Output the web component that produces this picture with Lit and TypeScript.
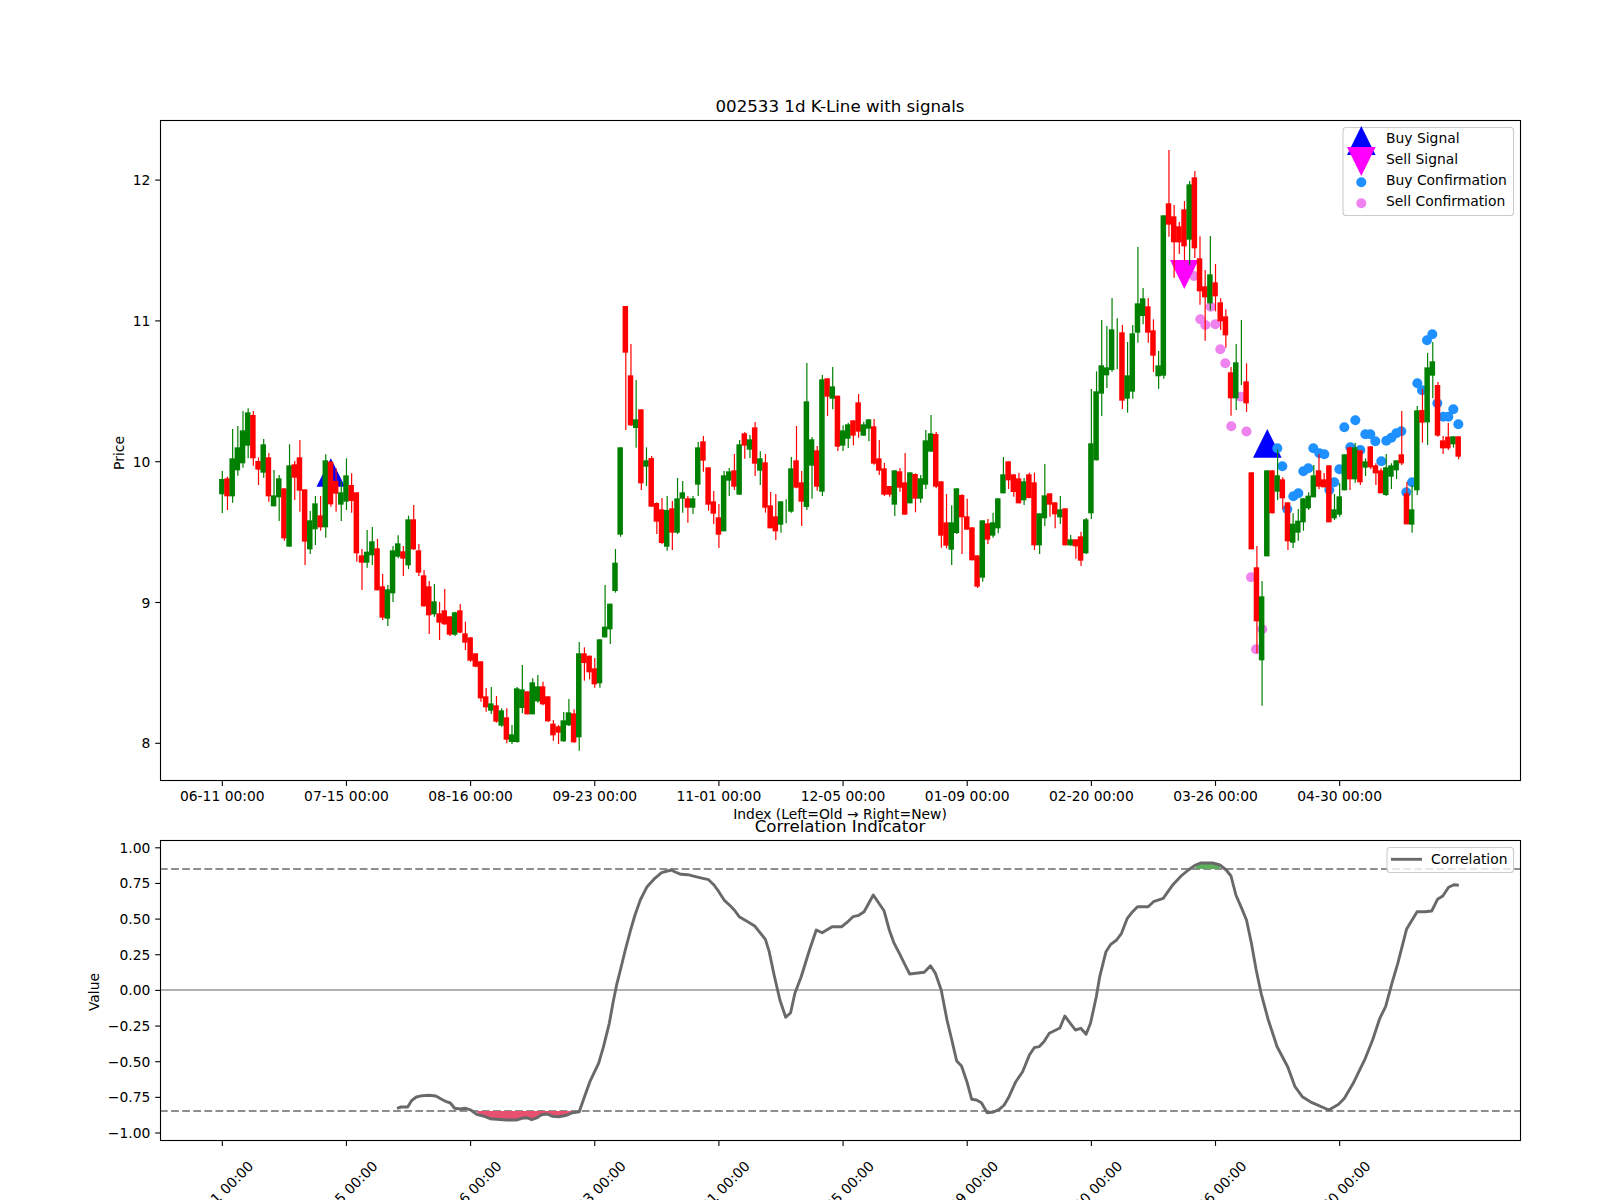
import { LitElement, html, svg, css } from "lit";
import { customElement } from "lit/decorators.js";

type Candle = { up: boolean; top: number; bot: number; wt: number; wb: number };

// Each block is read at 1/3 pixel steps above a base y: colour, body top, body bottom, wick top, wick bottom.
const block = (base: number, rows: string): Candle[] =>
  rows.trim().split(/\s*,\s*/).map((r) => {
    const [c, a, b, d, e] = r.trim().split(/\s+/);
    const f = (v: string) => base + Number(v) / 3;
    return { up: c === "g", top: f(a), bot: f(b), wt: f(d), wb: f(e) };
  });

const candles: Candle[] = [
  ...block(395, `g 252 298 228 354, r 250 304 245 345, g 190 304 102 323, g 157 226 93 242, g 106 205 48 218,
    g 52 152 40 190, r 60 190 48 212, r 198 224 187 270, g 148 233 132 248, r 187 304 174 320,
    g 301 334 225 334, g 250 307 240 378, r 280 430 280 437, g 211 455 148 455, r 208 248 198 315,
    r 187 287 135 350, r 283 440 283 510, g 376 463 348 477, g 325 403 303 450, r 361 397 303 407,
    g 196 397 178 428, r 200 328 198 335, r 258 296 220 350, g 292 329 258 378, g 241 320 190 345,
    r 270 318 235 353, r 292 475 292 500`),
  ...block(430, `r 376 398 357 480, g 365 398 300 413, g 334 376 291 405, r 355 481 327 481, r 469 563 432 570,
    g 478 566 465 588, g 361 490 348 516, g 340 380 316 385, r 364 386 348 438, g 268 406 257 417,
    r 268 358 225 360, r 361 428 342 438, r 436 529 420 530, r 469 556 453 612, g 514 553 462 560,
    r 550 578 516 630, r 541 583 477 585, r 559 614 559 618, g 547 614 545 618, r 541 608 522 610,
    r 610 638 575 660, r 622 692 622 695, r 670 710 670 712, r 694 805 694 815, r 799 832 774 845,
    g 820 842 771 852, r 826 875 798 878, g 841 887 835 890, r 862 929 835 940, g 913 936 885 942,
    g 775 936 771 938, g 778 834 705 850, r 784 853 784 853, g 757 853 745 853, g 769 814 735 818,
    r 769 823 755 826, r 799 874 799 875, r 881 916 870 932, r 889 908 885 942, g 871 934 846 935,
    g 847 886 807 888, r 850 937 838 938, g 670 922 636 962, r 670 699 652 752, r 677 727 677 748,
    r 715 763 684 773, g 628 760 628 773, g 590 622 465 623, g 521 598 521 642, g 398 483 357 488`),
  ...block(280, `g 502 764 502 770, r 78 218 78 450, r 286 436 192 438, g 418 444 300 503, r 388 610 388 630,
    g 541 560 502 618, r 534 680 528 680, r 669 725 667 762, r 688 789 654 793, g 690 800 648 812,
    r 685 758 663 810, g 655 758 594 762, g 637 656 603 698, r 655 683 648 728, g 655 683 648 702,
    g 502 614 486 648, r 484 542 468 575, r 562 674 562 692, r 664 701 633 732, r 712 764 672 804,
    g 586 754 573 754, g 574 602 564 648, r 571 620 522 630, g 493 644 480 644, r 460 497 456 536,
    g 478 509 465 534, r 442 551 426 588, g 535 572 514 615, r 547 683 522 698, r 676 745 636 745,
    r 709 754 642 780, g 664 734 664 758, g 700 700 658 730, g 565 695 531 698, r 541 623 438 625,
    r 607 665 573 738, g 364 681 249 690, g 478 557 471 656, r 511 620 498 632, g 298 635 285 648,
    r 295 350 295 408, g 319 356 261 388, r 347 500 347 513, g 451 497 436 513, g 433 476 428 504,
    r 421 467 421 496, r 367 455 342 473, g 433 467 425 467, g 418 446 418 484, r 439 551 417 554,
    r 535 572 480 585, r 565 644 549 648, r 618 644 618 650, g 571 674 571 708, r 574 623 564 635,
    r 607 704 519 704, g 577 670 577 670, r 582 656 580 697, g 595 656 585 668, g 481 614 450 627,
    g 460 515 405 515, r 462 620 456 625, r 604 767 604 803, r 727 797 642 805, g 727 809 676 855,
    g 625 759 625 762, r 645 712 643 822, r 709 749 656 749, r 742 841 742 841, r 826 920 826 924,
    g 721 893 721 905, r 730 779 717 792, g 727 767 698 773, g 655 745 655 760, g 583 640 531 640,
    r 544 601 544 627, r 583 636 583 650, r 595 670 578 670, g 604 661 594 675, r 583 654 578 655,
    r 607 796 578 810, g 700 796 700 822, g 646 715 552 738, r 640 674 640 710, r 667 703 667 745,
    g 688 712 648 732, r 685 796 685 796, g 778 796 765 798, r 778 799 778 836, r 769 842 755 858,
    g 718 820 714 822, g 490 700 327 717, g 334 541 274 541`),
  ...block(110, `g 766 851 630 918, g 772 796 648 834, g 658 780 564 785, g 700 700 625 778, r 667 872 645 897,
    g 796 866 696 908, g 670 845 645 866, g 580 668 411 698, g 565 618 534 643, r 589 668 564 698,
    r 661 737 628 786, g 766 799 723 836, g 316 797 316 806, r 280 344 120 380, r 319 397 285 503,
    r 349 397 336 432, r 298 409 273 453, g 223 389 213 465, r 202 415 183 444, r 445 544 379 584,
    r 529 562 480 692, g 493 580 378 600, r 517 559 462 604, r 577 634 565 660, r 619 676 598 713,
    r 787 865 771 917, g 757 865 702 900, g 700 700 630 825, r 814 880 760 906`),
  ...block(400, `r 217 448 217 448, r 502 664 438 760, g 589 781 543 917, g 211 469 211 469, r 211 340 211 340,
    g 226 275 148 300, r 238 295 232 328, r 307 424 307 450, g 371 428 340 444, g 362 398 327 422,
    g 295 367 295 392, g 287 325 277 330, g 226 292 195 292, r 211 260 162 268, r 238 262 219 262,
    r 196 367 196 367, g 328 355 282 360, g 289 344 250 350, g 163 271 163 271, r 142 238 140 270,
    g 142 238 128 248, r 151 247 151 255, g 184 203 175 228, r 139 202 139 208, r 196 220 190 255,
    r 211 280 205 280, g 202 285 162 288, g 196 230 190 267, g 181 211 181 237, r 163 190 33 195,
    r 280 373 246 373, g 328 374 256 398, g 31 271 18 285, r 30 68 -33 128, g -98 67 -142 135,
    g -116 -73 -174 -5, r -45 107 -54 110, r 121 145 108 162, r 110 145 69 150, g 109 133 109 143,
    r 109 170 109 178`),
];

const wickX = (i: number) => 222.3 + 5.173 * i;
const priceY = (p: number) => 743.3 - 140.8 * (p - 8);
const corrY = (v: number) => 990.4 - 142.6 * v;

const dates = ["06-11", "07-15", "08-16", "09-23", "11-01", "12-05", "01-09", "02-20", "03-26", "04-30"]
  .map((d) => `${d} 00:00`);
const corrTicks = ["1.00", "0.75", "0.50", "0.25", "0.00", "−0.25", "−0.50", "−0.75", "−1.00"];

const pairs = (s: string) => s.trim().split(/\s+/).map((p) => p.split(",").map(Number));

const sellDots = pairs(`1194,276 1210.7,306.7 1200.3,319.3 1205.3,325 1215.3,324.3 1220.3,349.3 1225.3,363.3
  1240.7,396.7 1231.3,426.3 1246.5,431.5 1251,577.3 1262.3,629.3 1256,649.3`);

const buyDots = pairs(`232,145 247,199 262,328 280,289 295,280 310,214 325,205 340,145 358,160 373,163 388,270
  403,247 418,208 433,82 451,142 466,61 481,150 496,103 511,103 526,124 544,184 559,122 574,113 589,100 604,94
  619,277 636,247 652,-50 666,-29 681,-179 697,-197 712,10 730,50 745,50 760,28 775,73`)
  .map(([x, y]) => [1200 + x / 3, 400 + y / 3]);

const squash = 760 / 1568;
const leftPart = pairs(`654,985 662,981 676,981 684,962 694,951 706,947 720,946 734,948 746,958 756,965 764,969
  773,985 784,987 796,985 806,990 820,1004 832,1008 846,1016 860,1018 880,1020 900,1020 912,1015 922,1013 932,1019
  942,1014 952,1004 964,1002 974,1009 988,1010 1004,1006 1016,998 1030,995 1042,945 1052,905 1060,880 1070,850
  1080,800 1092,730 1100,665 1108,610 1115,570 1125,510 1136,450 1145,405 1156,360 1170,320 1186,295 1200,278
  1220,270 1228,276 1240,283 1254,284 1270,290 1285,295 1297,299 1308,315 1318,335 1330,362 1342,378 1350,390
  1360,410 1375,423 1392,438 1403,458 1414,478 1422,515 1432,585 1444,660 1456,712 1466,698 1475,640 1488,590
  1505,510 1519,450 1531,458`).map(([x, y]) => [80 + x * squash, 780 + y / 3]);
const rightPart = pairs(`25,440 45,440 55,428 68,410 80,406 91,395 110,345 132,392 143,450 152,487 165,524 175,553
  185,582 215,577 228,557 238,580 250,630 262,720 272,780 282,843 292,858 303,905 313,958 323,960 333,968 345,998
  358,996 370,988 380,975 390,950 404,905 418,875 432,825 442,803 452,800 462,785 473,760 495,744 505,708 518,733
  527,750 538,745 549,763 558,730 570,650 577,590 590,515 600,493 612,480 622,460 634,415 645,395 655,380 677,380
  688,365 708,355 728,314 745,288 760,270 775,255 785,249 810,249 825,255 838,270 848,288 858,345 870,385 880,420
  890,490 900,570 910,640 925,720 943,800 965,860 980,920 995,950 1015,968 1050,990 1070,973 1082,955 1100,910
  1125,835 1140,780 1155,715 1167,680 1180,610 1192,550 1210,448 1232,395 1248,395 1262,393 1274,358 1285,348
  1297,322 1308,314 1318,316`).map(([x, y]) => [820 + x * squash, 780 + y / 3]);
const corrLine = [...leftPart, ...rightPart];
const pts = (p: number[][]) => p.map(([x, y]) => `${x.toFixed(1)},${y.toFixed(1)}`).join(" ");

const lowY = 1111;
const highY = 869;
const redFill = corrLine.filter(([x, y]) => y >= lowY && x > 465 && x < 585);
const greenFill = corrLine.filter(([x, y]) => y <= highY && x > 1180 && x < 1240);

const tri = (x: number, base: number, apex: number, half = 14.3) =>
  `${x - half},${base} ${x + half},${base} ${x},${apex}`;

@customElement("app-root")
export class AppRoot extends LitElement {
  static styles = css`
    :host { display: block; width: 1600px; height: 1200px; background: #fff; overflow: hidden; }
    svg { display: block; }
    text { font-family: "DejaVu Sans", sans-serif; font-size: 13.89px; fill: #000; }
    .title { font-size: 16.67px; text-anchor: middle; }
    .mid { text-anchor: middle; }
    .end { text-anchor: end; }
    .spine { fill: none; stroke: #000; stroke-width: 1.1; }
    .tick { stroke: #000; stroke-width: 1.1; }
    .wick-g { stroke: #008000; stroke-width: 1.2; }
    .wick-r { stroke: #ff0000; stroke-width: 1.2; }
    .body-g { fill: #008000; }
    .body-r { fill: #ff0000; }
    .buy-mark { fill: #0000ff; }
    .sell-mark { fill: #ff00ff; }
    .buy-dot { fill: #1e90ff; }
    .sell-dot { fill: #ee82ee; }
    .legend { fill: rgba(255, 255, 255, 0.8); stroke: #cccccc; stroke-width: 1.1; }
    .corr { fill: none; stroke: #696969; stroke-width: 2.9; stroke-linejoin: round; }
    .zero { stroke: #b0b0b0; stroke-width: 2.2; }
    .dash { stroke: #8e8e8e; stroke-width: 2; stroke-dasharray: 7.7 3.4; }
    .fill-red { fill: #e8506f; }
    .fill-green { fill: #5cae5c; }
  `;

  private xTicks(bottom: number) {
    return dates.map((_, i) => {
      const x = wickX(24 * i);
      return svg`<line class="tick" x1=${x} x2=${x} y1=${bottom} y2=${bottom + 4.9}></line>`;
    });
  }

  render() {
    return html`
      <svg width="1600" height="1200" viewBox="0 0 1600 1200" role="img">
        <rect width="1600" height="1200" fill="#fff"></rect>

        <text class="title" x="840" y="111.7">002533 1d K-Line with signals</text>

        ${sellDots.map(([x, y]) => svg`<circle class="sell-dot" cx=${x} cy=${y} r="5"></circle>`)}
        <polygon class="sell-mark" points=${tri(1184.3, 260, 289)}></polygon>
        <polygon class="buy-mark" points=${tri(330.8, 486.7, 458.3)}></polygon>
        <polygon class="buy-mark" points=${tri(1267.3, 457.7, 429)}></polygon>
        ${buyDots.map(([x, y]) => svg`<circle class="buy-dot" cx=${x} cy=${y} r="5"></circle>`)}

        ${candles.map((c, i) => {
          const x = wickX(i);
          const k = c.up ? "g" : "r";
          return svg`
            <line class="wick-${k}" x1=${x} x2=${x} y1=${c.wt} y2=${c.wb}></line>
            ${c.bot > c.top
              ? svg`<rect class="body-${k}" x=${x - 3.2} y=${c.top} width="5.5" height=${c.bot - c.top}></rect>`
              : ""}
          `;
        })}

        <rect class="spine" x="160.5" y="120.5" width="1360" height="660"></rect>
        ${this.xTicks(781)}
        ${dates.map((d, i) => svg`<text class="mid" x=${wickX(24 * i)} y="801">${d}</text>`)}
        ${[8, 9, 10, 11, 12].map((p) => svg`
          <line class="tick" x1="155.2" x2="160" y1=${priceY(p)} y2=${priceY(p)}></line>
          <text class="end" x="150.3" y=${priceY(p) + 5}>${p}</text>
        `)}
        <text class="mid" x="840" y="819">Index (Left=Old → Right=New)</text>
        <text class="mid" transform="translate(124 453) rotate(-90)">Price</text>

        <rect class="legend" x="1343" y="127.5" width="170.5" height="88" rx="3"></rect>
        <polygon class="buy-mark" points=${tri(1361.3, 155, 126)}></polygon>
        <polygon class="sell-mark" points=${tri(1361.3, 147, 176)}></polygon>
        <circle class="buy-dot" cx="1361.3" cy="182.3" r="5"></circle>
        <circle class="sell-dot" cx="1361.3" cy="203.3" r="5"></circle>
        <text x="1386" y="143.3">Buy Signal</text>
        <text x="1386" y="164.3">Sell Signal</text>
        <text x="1386" y="185.3">Buy Confirmation</text>
        <text x="1386" y="206.3">Sell Confirmation</text>

        <text class="title" x="840" y="831.7">Correlation Indicator</text>
        <line class="zero" x1="160" x2="1520" y1="990" y2="990"></line>
        <line class="dash" x1="160" x2="1520" y1=${highY} y2=${highY}></line>
        <line class="dash" x1="160" x2="1520" y1=${lowY} y2=${lowY}></line>
        <polygon class="fill-red" points=${`${redFill[0][0]},${lowY} ${pts(redFill)} ${redFill[redFill.length - 1][0]},${lowY}`}></polygon>
        <polygon class="fill-green" points=${`${greenFill[0][0]},${highY} ${pts(greenFill)} ${greenFill[greenFill.length - 1][0]},${highY}`}></polygon>
        <polyline class="corr" points=${pts(corrLine)}></polyline>

        <rect class="spine" x="160.5" y="840.5" width="1360" height="300"></rect>
        ${this.xTicks(1141)}
        ${dates.map((d, i) => svg`<text class="mid" transform=${`translate(${wickX(24 * i) + 2} 1197) rotate(-45)`}>${d}</text>`)}
        ${corrTicks.map((t, i) => {
          const y = corrY(1 - 0.25 * i);
          return svg`
            <line class="tick" x1="155.2" x2="160" y1=${y} y2=${y}></line>
            <text class="end" x="150.3" y=${y + 5}>${t}</text>
          `;
        })}
        <text class="mid" transform="translate(99 992) rotate(-90)">Value</text>

        <rect class="legend" x="1387" y="847.5" width="126.5" height="25" rx="3"></rect>
        <line class="corr" x1="1391" x2="1422" y1="859.3" y2="859.3"></line>
        <text x="1431" y="864">Correlation</text>
      </svg>
    `;
  }
}
